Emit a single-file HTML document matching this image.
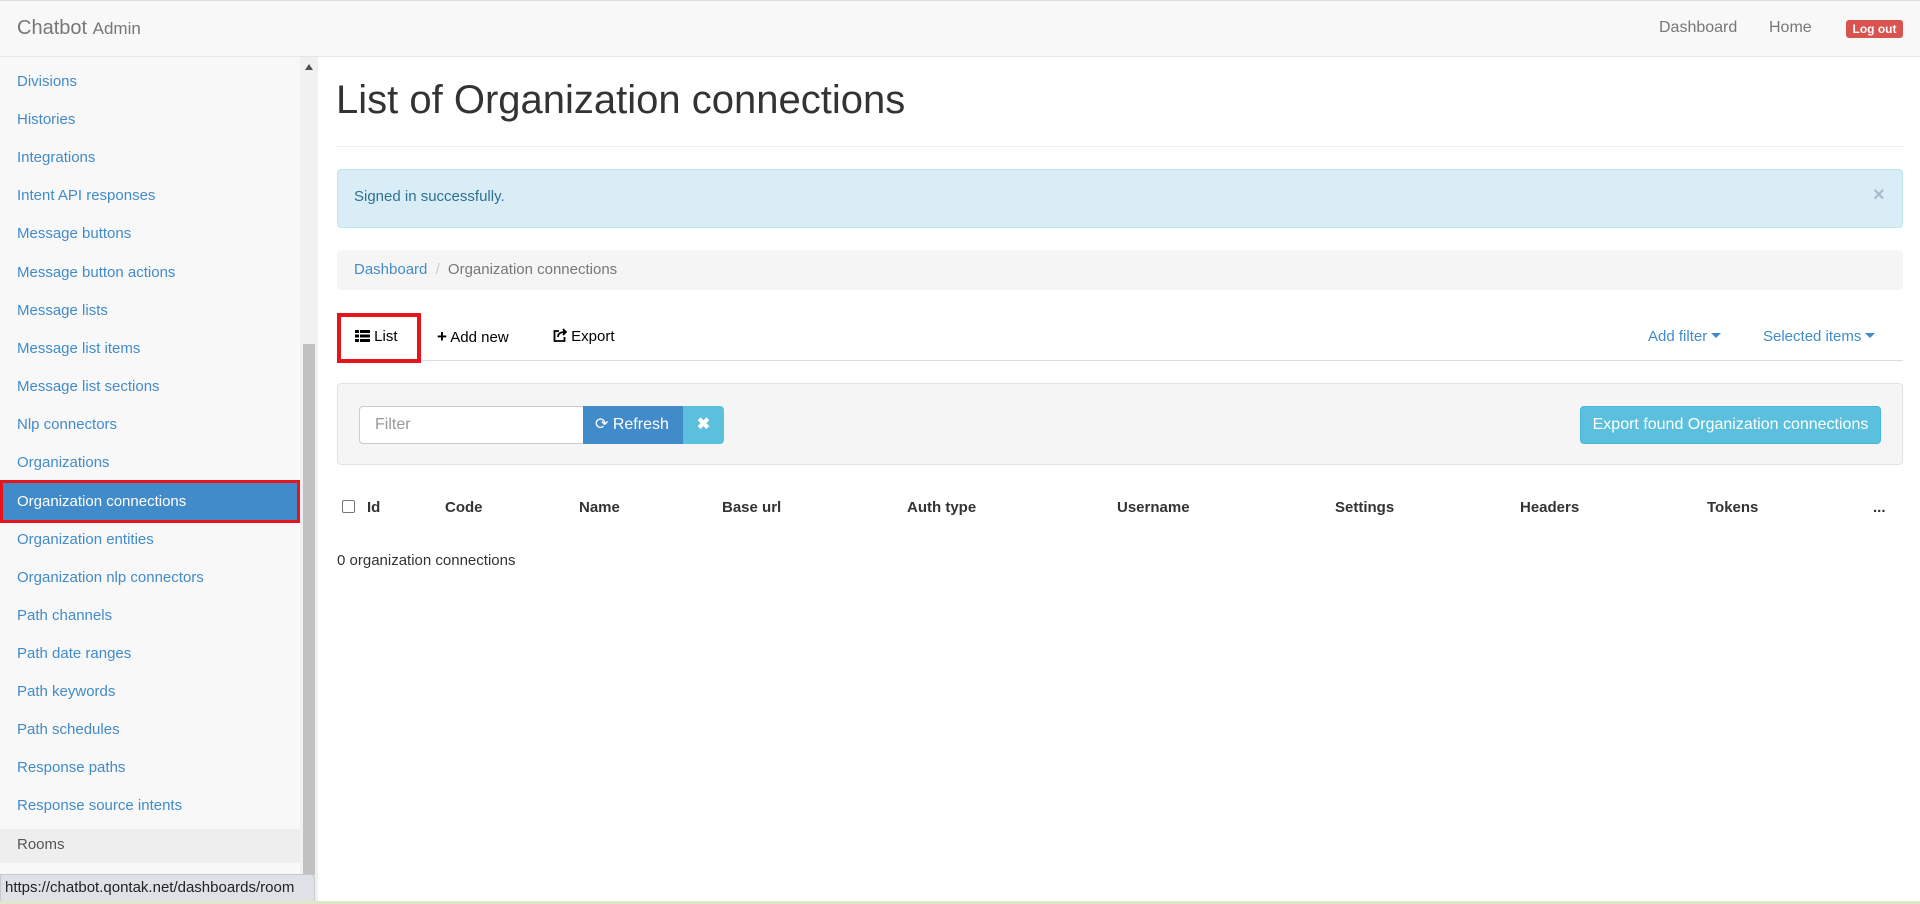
<!DOCTYPE html>
<html><head><meta charset="utf-8"><style>
*{box-sizing:border-box;margin:0;padding:0}
body{width:1920px;height:904px;overflow:hidden;font-family:"Liberation Sans",Arial,sans-serif;font-size:15px;color:#333;background:#fff;position:relative}
.a{position:absolute;white-space:nowrap}
.nav{position:absolute;left:0;top:0;width:1920px;height:57px;background:#f8f8f8;border-top:1px solid #ddd;border-bottom:1px solid #e7e7e7}
.side{position:absolute;left:0;top:57px;width:300px;height:847px;background:#f8f8f8}
.side div{position:absolute;left:17px;color:#428bca;font-size:15px;line-height:20px}
.blue{color:#428bca}
.hd{font-weight:bold;font-size:15px;top:499px}
.car{display:inline-block;width:0;height:0;border-left:5px solid transparent;border-right:5px solid transparent;border-top:5px solid #428bca;vertical-align:3px;margin-left:4px}
</style></head><body>
<div class="nav"></div>
<div class="a" style="left:17px;top:17px;font-size:20px;color:#777">Chatbot <span style="font-size:17px">Admin</span></div>
<div class="a" style="left:1659px;top:19px;color:#777;font-size:16px">Dashboard</div>
<div class="a" style="left:1769px;top:19px;color:#777;font-size:16px">Home</div>
<div class="a" style="left:1846px;top:20px;width:57px;height:18px;background:#d9534f;border-radius:3px;color:#fff;font-weight:bold;font-size:12px;text-align:center;line-height:18px">Log out</div>

<div class="side">
<div style="top:15px">Divisions</div>
<div style="top:53px">Histories</div>
<div style="top:91px">Integrations</div>
<div style="top:129px">Intent API responses</div>
<div style="top:167px">Message buttons</div>
<div style="top:206px">Message button actions</div>
<div style="top:244px">Message lists</div>
<div style="top:282px">Message list items</div>
<div style="top:320px">Message list sections</div>
<div style="top:358px">Nlp connectors</div>
<div style="top:396px">Organizations</div>
<div style="left:0;top:423px;width:300px;height:43px;background:#428bca;border:3px solid #e8141c"></div>
<div style="top:435px;color:#fff">Organization connections</div>
<div style="top:473px">Organization entities</div>
<div style="top:511px">Organization nlp connectors</div>
<div style="top:549px">Path channels</div>
<div style="top:587px">Path date ranges</div>
<div style="top:625px">Path keywords</div>
<div style="top:663px">Path schedules</div>
<div style="top:701px">Response paths</div>
<div style="top:739px">Response source intents</div>
<div style="left:0;top:772px;width:300px;height:34px;background:#eee"></div>
<div style="top:778px;color:#555">Rooms</div>
</div>
<div class="a" style="left:300px;top:57px;width:18px;height:847px;background:#f1f1f1"></div>
<div class="a" style="left:303px;top:344px;width:12px;height:531px;background:#c1c1c1"></div>
<div class="a" style="left:305px;top:64px;width:0;height:0;border-left:4px solid transparent;border-right:4px solid transparent;border-bottom:6px solid #505050"></div>
<div class="a" style="left:0;top:874px;width:315px;height:28px;background:#dee1e6;border:1px solid #c6c9ce;border-radius:0 4px 0 0;font-size:15px;line-height:26px;padding-left:4px;color:#222">https://chatbot.qontak.net/dashboards/room</div>
<div class="a" style="left:0;top:901px;width:1920px;height:3px;background:#dfe8c8"></div>

<div class="a" style="left:336px;top:78px;font-size:40px;color:#333">List of Organization connections</div>
<div class="a" style="left:337px;top:146px;width:1566px;height:1px;background:#eee"></div>
<div class="a" style="left:337px;top:169px;width:1566px;height:59px;background:#d9edf7;border:1px solid #bce8f1;border-radius:4px"></div>
<div class="a" style="left:354px;top:188px;color:#31708f">Signed in successfully.</div>
<div class="a" style="left:1873px;top:184px;color:#a7bcc6;font-size:20px;font-weight:bold">×</div>
<div class="a" style="left:337px;top:250px;width:1566px;height:40px;background:#f5f5f5;border-radius:4px"></div>
<div class="a" style="left:354px;top:261px"><span class="blue">Dashboard</span> <span style="color:#ccc;padding:0 4px">/</span> <span style="color:#777">Organization connections</span></div>

<div class="a" style="left:337px;top:360px;width:1566px;height:1px;background:#ddd"></div>
<div class="a" style="left:337px;top:313px;width:84px;height:50px;border:4px solid #e8141c;background:#fff"></div>
<div class="a" style="left:355px;top:328px;color:#000"><svg width="15" height="12" style="vertical-align:-1px"><rect x="0" y="0" width="4" height="3"/><rect x="5" y="0" width="10" height="3"/><rect x="0" y="4.5" width="4" height="3"/><rect x="5" y="4.5" width="10" height="3"/><rect x="0" y="9" width="4" height="3"/><rect x="5" y="9" width="10" height="3"/></svg> List</div>
<div class="a" style="left:437px;top:327px;color:#000"><b style="font-size:17px">+</b> Add new</div>
<div class="a" style="left:553px;top:328px;color:#000"><svg width="14" height="14" style="vertical-align:-1px" fill="none" stroke="#000" stroke-width="1.8"><path d="M6 3H1.5v10h10V9"/><path d="M5 9c0-4 3-5 7-5" /><path d="M10 1l3 3-3 3" fill="#000"/></svg> Export</div>
<div class="a blue" style="left:1648px;top:328px">Add filter<span class="car"></span></div>
<div class="a blue" style="left:1763px;top:328px">Selected items<span class="car"></span></div>

<div class="a" style="left:337px;top:383px;width:1566px;height:82px;background:#f5f5f5;border:1px solid #e3e3e3;border-radius:4px"></div>
<div class="a" style="left:359px;top:406px;width:225px;height:38px;background:#fff;border:1px solid #ccc;border-radius:4px 0 0 4px;color:#999;padding:9px 15px;font-size:16px">Filter</div>
<div class="a" style="left:583px;top:406px;width:100px;height:38px;background:#428bca;color:#fff;line-height:38px;padding-left:12px;font-size:16px">⟳ Refresh</div>
<div class="a" style="left:683px;top:406px;width:41px;height:38px;background:#5bc0de;color:#fff;border-radius:0 4px 4px 0;text-align:center;line-height:38px;font-weight:bold;font-size:16px">✖</div>
<div class="a" style="left:1580px;top:406px;width:301px;height:38px;background:#5bc0de;border:1px solid #46b8da;border-radius:4px;color:#fff;text-align:center;line-height:36px;font-size:16px">Export found Organization connections</div>

<div class="a" style="left:342px;top:500px;width:13px;height:13px;border:1px solid #777;border-radius:2px;background:#fff"></div>
<div class="a hd" style="left:367px">Id</div>
<div class="a hd" style="left:445px">Code</div>
<div class="a hd" style="left:579px">Name</div>
<div class="a hd" style="left:722px">Base url</div>
<div class="a hd" style="left:907px">Auth type</div>
<div class="a hd" style="left:1117px">Username</div>
<div class="a hd" style="left:1335px">Settings</div>
<div class="a hd" style="left:1520px">Headers</div>
<div class="a hd" style="left:1707px">Tokens</div>
<div class="a hd" style="left:1873px">...</div>
<div class="a" style="left:337px;top:552px">0 organization connections</div>
</body></html>
